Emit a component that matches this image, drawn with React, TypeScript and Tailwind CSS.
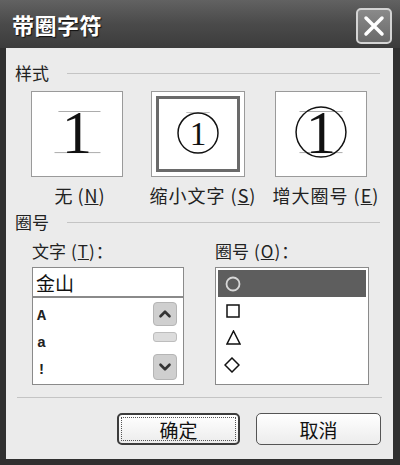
import React from "react";
import { ChevronUp, ChevronDown } from "lucide-react";

const cjk = { fontFamily: '"Noto Sans CJK SC", "Noto Sans", sans-serif' };

function Header({ label }: { label: string }) {
  return (
    <div className="flex items-center h-[22px] pl-[9px] pr-[13px]">
      <span className="text-[17px] leading-none text-[#222]">{label}</span>
      <div className="flex-1 ml-[18px] h-px bg-[#c4c4c4] mt-[2px]" />
    </div>
  );
}

function Option({
  children,
  selected,
  width,
}: {
  children: React.ReactNode;
  selected?: boolean;
  width: number;
}) {
  return (
    <div
      className={
        "h-[86px] bg-white border border-[#9a9a9a] " +
        (selected ? "p-[4px]" : "")
      }
      style={{ width }}
    >
      {selected ? (
        <div className="w-full h-full border-[3px] border-[#6a6a6a] flex items-center justify-center">
          {children}
        </div>
      ) : (
        <div className="w-full h-full flex items-center justify-center">{children}</div>
      )}
    </div>
  );
}

function Key({ k }: { k: string }) {
  return (
    <span className="ml-[5px] tracking-[1px]">
      (<span className="underline">{k}</span>)
    </span>
  );
}

export default function App() {
  return (
    <div
      className="w-[400px] h-[465px] bg-[#303030] flex flex-col overflow-hidden"
      style={cjk}
    >
      {/* title bar */}
      <div className="h-[48px] flex items-center justify-between pl-[12px] pr-[8px] bg-gradient-to-b from-[#626262] via-[#4a4a4a] to-[#3c3c3c]">
        <span
          className="text-white font-bold text-[22px] leading-none tracking-[0.5px]"
          style={{ textShadow: "1px 1px 1px #111" }}
        >
          带圈字符
        </span>
        <div className="w-[36px] h-[36px] rounded-[5px] border-2 border-[#d4d4d4] bg-gradient-to-b from-[#8a8a8a] to-[#6a6a6a] flex items-center justify-center mt-[4px]">
          <svg width="22" height="22" viewBox="0 0 22 22">
            <path d="M3 3 L19 19 M19 3 L3 19" stroke="white" strokeWidth="3.5" strokeLinecap="round" />
          </svg>
        </div>
      </div>

      {/* body */}
      <div className="ml-[6px] mr-[7px] h-[411px] bg-[#ebebeb] flex flex-col">
        <div className="pt-[13px]">
          <Header label="样式" />
        </div>

        {/* options */}
        <div className="flex pl-[25px] mt-[8px] gap-[30px]">
          <div className="flex flex-col items-center">
            <Option width={92}>
              <svg width="92" height="86" viewBox="0 0 92 86">
                <line x1="27" y1="20" x2="70" y2="20" stroke="#aaa" strokeWidth="1" />
                <line x1="23" y1="62" x2="70" y2="62" stroke="#aaa" strokeWidth="1" />
                <text x="46" y="62" textAnchor="middle" fontSize="62" fontFamily='"Liberation Serif", serif' fill="#111">1</text>
              </svg>
            </Option>
          </div>
          <div className="flex flex-col items-center -ml-[2px]">
            <Option width={94} selected>
              <svg width="80" height="72" viewBox="0 0 80 72">
                <line x1="28" y1="14" x2="52" y2="14" stroke="#bbb" strokeWidth="1" />
                <circle cx="40" cy="35" r="20.5" fill="none" stroke="#111" strokeWidth="1.5" />
                <text x="40" y="47" textAnchor="middle" fontSize="34" fontFamily='"Liberation Serif", serif' fill="#111">1</text>
              </svg>
            </Option>
          </div>
          <div className="flex flex-col items-center">
            <Option width={92}>
              <svg width="92" height="86" viewBox="0 0 92 86">
                <line x1="24" y1="20" x2="68" y2="20" stroke="#aaa" strokeWidth="1" />
                <line x1="24" y1="62" x2="68" y2="62" stroke="#aaa" strokeWidth="1" />
                <circle cx="46" cy="41" r="25.5" fill="none" stroke="#111" strokeWidth="1.5" />
                <text x="46" y="62" textAnchor="middle" fontSize="62" fontFamily='"Liberation Serif", serif' fill="#111">1</text>
              </svg>
            </Option>
          </div>
        </div>

        {/* labels */}
        <div className="flex mt-[5px] h-[26px] items-center text-[18px] leading-none text-[#222]">
          <div className="w-[140px] text-center pl-[8px]">
            无<Key k="N" />
          </div>
          <div className="w-[122px] text-center -ml-[4px] whitespace-nowrap tracking-[1px]">
            缩小文字<Key k="S" />
          </div>
          <div className="w-[118px] text-center ml-[3px] whitespace-nowrap tracking-[1px]">
            增大圈号<Key k="E" />
          </div>
        </div>

        <div className="mt-[2px]">
          <Header label="圈号" />
        </div>

        {/* lower section */}
        <div className="flex pl-[26px] mt-[8px]">
          <div className="flex flex-col w-[152px]">
            <div className="h-[20px] text-[17px] leading-none text-[#222] flex items-center">
              文字<Key k="T" />：
            </div>
            <div className="mt-[7px] h-[31px] bg-white border border-[#8a8a8a] border-b-2 flex items-center pl-[3px] text-[19px] leading-none text-[#111]">
              金山
            </div>
            <div className="h-[87px] bg-white border border-[#8a8a8a] border-t-0 flex">
              <div
                className="flex-1 flex flex-col pl-[4px] pt-[5px] text-[15px] font-bold leading-none text-[#222]"
                style={{ fontFamily: '"Liberation Mono", monospace' }}
              >
                <div className="h-[27px] flex items-center">A</div>
                <div className="h-[29px] flex items-center">a</div>
                <div className="h-[27px] flex items-center">!</div>
              </div>
              <div className="w-[26px] mr-[5px] flex flex-col items-center py-[4px]">
                <div className="w-[24px] h-[24px] rounded-[4px] bg-[#cfcfcf] border border-[#b5b5b5] flex items-center justify-center">
                  <ChevronUp size={18} strokeWidth={3.5} color="#333" />
                </div>
                <div className="w-[24px] h-[10px] rounded-[3px] bg-[#dcdcdc] border border-[#bdbdbd] mt-[6px]" />
                <div className="flex-1" />
                <div className="w-[24px] h-[26px] rounded-[4px] bg-[#cfcfcf] border border-[#b5b5b5] flex items-center justify-center">
                  <ChevronDown size={18} strokeWidth={3.5} color="#333" />
                </div>
              </div>
            </div>
          </div>

          <div className="flex flex-col w-[154px] ml-[31px]">
            <div className="h-[20px] text-[17px] leading-none text-[#222] flex items-center">
              圈号<Key k="O" />：
            </div>
            <div className="mt-[7px] h-[118px] bg-white border border-[#8a8a8a] p-[2px] flex flex-col text-[#111]">
              <div className="h-[27px] bg-[#5e5e5e] flex items-center pl-[7px]">
                <svg width="16" height="16" viewBox="0 0 16 16">
                  <circle cx="8" cy="8" r="6.5" fill="none" stroke="#d8d8d8" strokeWidth="1.8" />
                </svg>
              </div>
              <div className="h-[27px] flex items-center pl-[8px]">
                <svg width="14" height="14" viewBox="0 0 14 14">
                  <rect x="1" y="1" width="12" height="12" fill="none" stroke="#111" strokeWidth="1.5" />
                </svg>
              </div>
              <div className="h-[27px] flex items-center pl-[8px]">
                <svg width="15" height="15" viewBox="0 0 15 15">
                  <path d="M7.5 1 L14 14 L1 14 Z" fill="none" stroke="#111" strokeWidth="1.5" />
                </svg>
              </div>
              <div className="h-[27px] flex items-center pl-[6px]">
                <svg width="16" height="16" viewBox="0 0 16 16">
                  <path d="M8 1 L15 8 L8 15 L1 8 Z" fill="none" stroke="#111" strokeWidth="1.5" />
                </svg>
              </div>
            </div>
          </div>
        </div>

        {/* separator */}
        <div className="mx-[11px] mt-[12px] h-px bg-[#c4c4c4]" />

        {/* buttons */}
        <div className="flex justify-end gap-[16px] pr-[12px] mt-[15px]">
          <button
            className="w-[123px] h-[32px] rounded-[5px] border-2 border-[#3c3c3c] bg-gradient-to-b from-white to-[#ececec] p-[2px]"
            style={cjk}
          >
            <div className="w-full h-full border border-dotted border-[#555] flex items-center justify-center text-[19px] leading-none text-[#111]">
              确定
            </div>
          </button>
          <button
            className="w-[125px] h-[32px] rounded-[5px] border border-[#555] bg-gradient-to-b from-white to-[#ececec] flex items-center justify-center text-[19px] leading-none text-[#111]"
            style={cjk}
          >
            取消
          </button>
        </div>
      </div>
    </div>
  );
}
